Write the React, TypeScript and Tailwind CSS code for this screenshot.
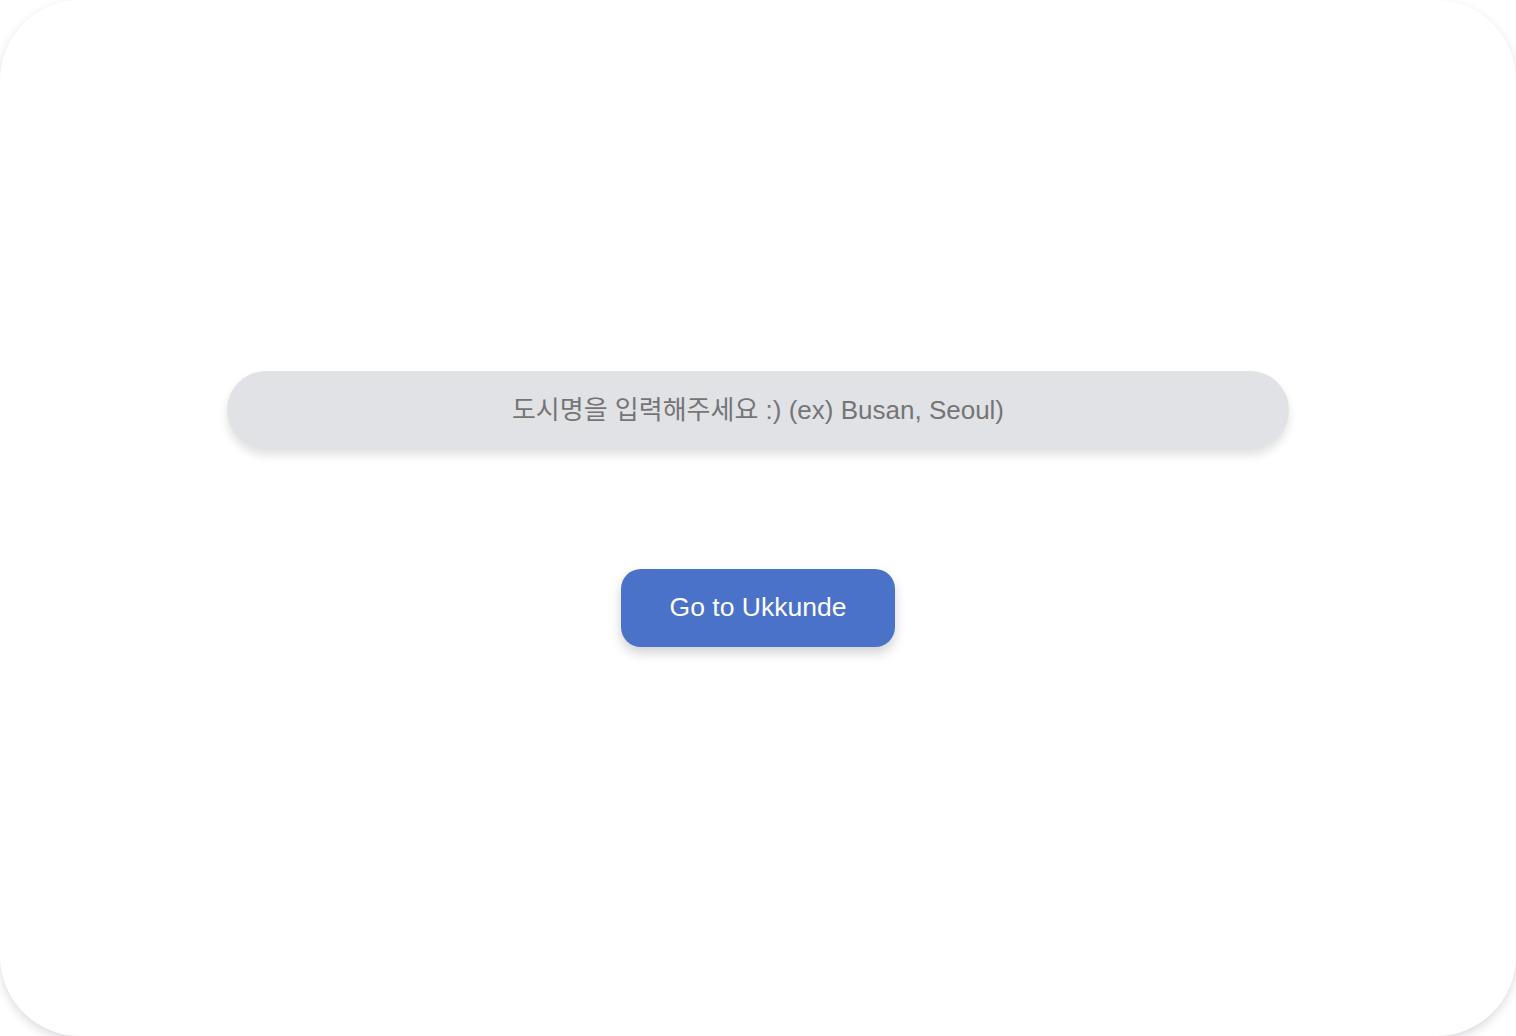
import { useState } from 'react';

const fontStack = `font-['Liberation_Sans','Noto_Sans_CJK_KR',sans-serif]`;

export default function App() {
    const [city, setCity] = useState('');

    return (
        <div className={`min-h-screen bg-white ${fontStack}`}>
            <main className="flex h-[1036px] w-full flex-col items-center rounded-[80px] bg-white pt-[371px] shadow-[0_4px_10px_rgba(60,60,90,0.18)]">
                <input
                    type="text"
                    value={city}
                    onChange={(e) => setCity(e.target.value)}
                    placeholder="도시명을 입력해주세요 :) (ex) Busan, Seoul)"
                    className="h-[78px] w-[1062px] rounded-full bg-[#e1e2e6] px-8 text-center text-[26px] text-[#333] shadow-[0_6px_10px_rgba(0,0,0,0.12)] outline-none placeholder:text-[#757575]"
                />
                <button
                    type="button"
                    className="mt-[120px] h-[78px] w-[274px] rounded-[20px] bg-[#4a72c9] text-[26.5px] text-white shadow-[0_6px_12px_rgba(0,0,0,0.18)]"
                >
                    Go to Ukkunde
                </button>
            </main>
        </div>
    );
}
